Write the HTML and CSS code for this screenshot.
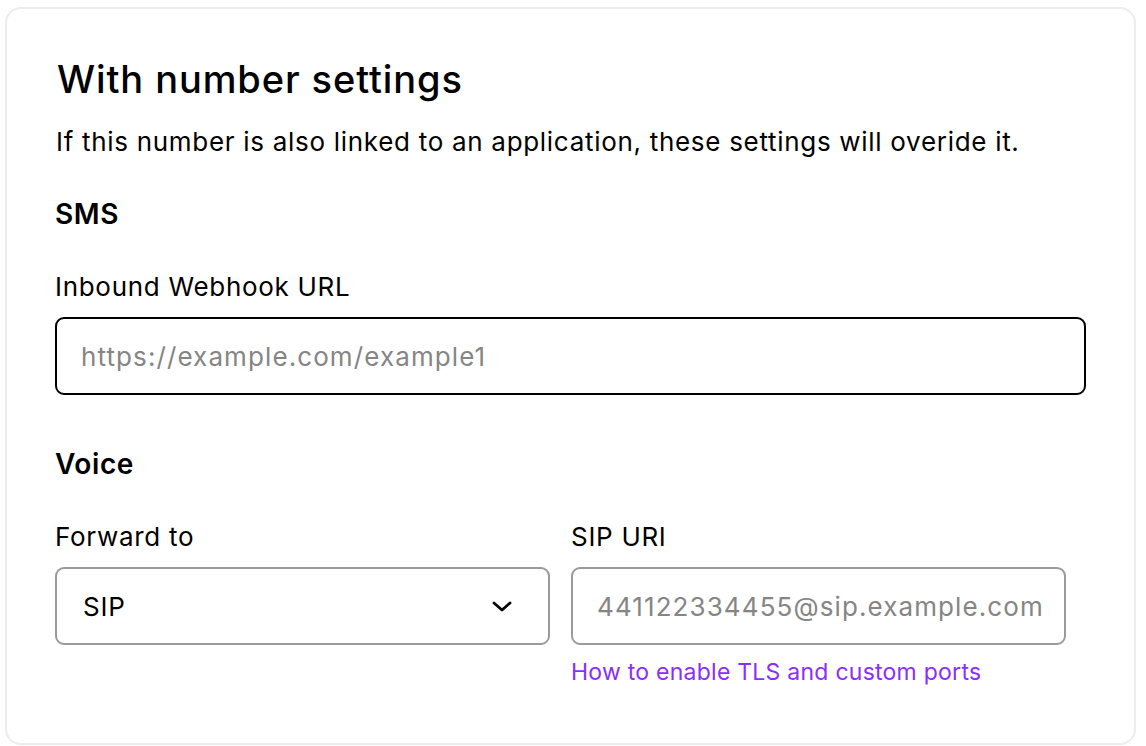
FILE: index.html
```html
<!DOCTYPE html>
<html>
<head>
<meta charset="utf-8">
<link rel="stylesheet" href="styles.css">
</head>
<body>
<div class="page">
  <section class="card">
    <h2 class="title">With number settings</h2>
    <p class="desc">If this number is also linked to an application, these settings will overide it.</p>

    <h3 class="section">SMS</h3>
    <div class="field">
      <label class="label">Inbound Webhook URL</label>
      <div class="input input-focus"><span class="placeholder">https://example.com/example1</span></div>
    </div>

    <h3 class="section voice">Voice</h3>
    <div class="row">
      <div class="field">
        <label class="label">Forward to</label>
        <div class="input select">
          <span class="value">SIP</span>
          <svg class="chevron" width="20" height="11" viewBox="0 0 20 11"><path d="M2 2 L10 9 L18 2" fill="none" stroke="#000" stroke-width="2.8" stroke-linecap="round" stroke-linejoin="round"/></svg>
        </div>
      </div>
      <div class="field">
        <label class="label">SIP URI</label>
        <div class="input"><span class="placeholder">441122334455@sip.example.com</span></div>
        <a class="link" href="#">How to enable TLS and custom ports</a>
      </div>
    </div>
  </section>
</div>
</body>
</html>
```
FILE: styles.css
```css
html, body {
  margin: 0;
  padding: 0;
  background: #ffffff;
}
body {
  font-family: Inter, "Noto Sans", sans-serif;
  color: #000;
}
.page {
  padding: 7px 10px 0 5px;
}
.card {
  box-sizing: border-box;
  width: 1131px;
  height: 738px;
  border: 2px solid #ececec;
  border-radius: 16px;
  padding: 46px 48px 0 48px;
}
.title {
  margin: 0;
  font-size: 38px;
  font-weight: 500;
  line-height: 48px;
  letter-spacing: 0.9px;
  padding-left: 2px;
}
.desc {
  margin: 21px 0 0 0;
  font-size: 26px;
  font-weight: 400;
  line-height: 36px;
  letter-spacing: 0.7px;
  padding-left: 1px;
}
.section {
  margin: 36px 0 0 0;
  font-size: 28px;
  font-weight: 600;
  line-height: 36px;
  letter-spacing: 0.6px;
  padding-left: 0;
}
.section.voice {
  margin-top: 51px;
}
.field {
  display: flex;
  flex-direction: column;
  margin-top: 37px;
}
.label {
  font-size: 26px;
  line-height: 36px;
  letter-spacing: 0.7px;
  padding-left: 0;
}
.input {
  box-sizing: border-box;
  margin-top: 12px;
  height: 78px;
  border: 2px solid #9a9a9a;
  border-radius: 9px;
  display: flex;
  align-items: center;
  padding: 0 24px;
  font-size: 26px;
  letter-spacing: 1.1px;
}
.input-focus {
  border-color: #000;
}
.placeholder {
  color: #858585;
}
.value {
  letter-spacing: 0.8px;
}
.select {
  justify-content: space-between;
  padding: 0 36px 0 26px;
}
.chevron {
  display: block;
}
.row {
  display: grid;
  grid-template-columns: 495px 495px;
  column-gap: 21px;
}
.link {
  margin-top: 11px;
  font-size: 23px;
  line-height: 32px;
  letter-spacing: 0.25px;
  color: #8a2eff;
  text-decoration: none;
}
```
